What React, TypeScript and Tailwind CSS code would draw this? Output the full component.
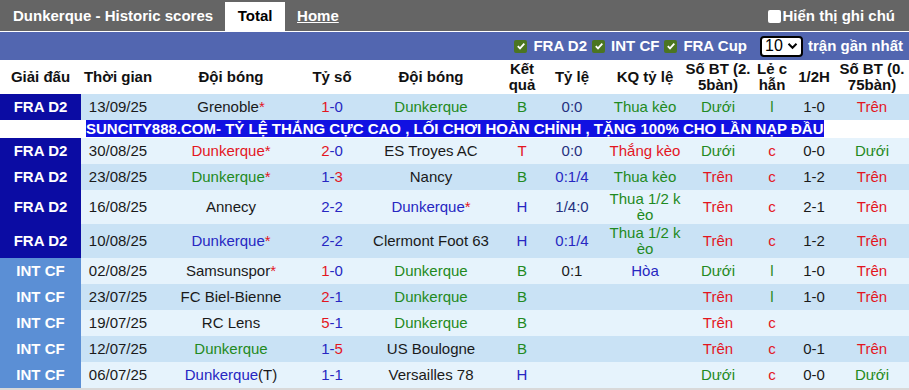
import type { ReactNode } from 'react';

const RED = 'text-[#e3161f]';
const GREEN = 'text-[#1f8a22]';
const BLUE = 'text-[#2727c2]';
const NAVY = 'text-[#25307f]';
const DARK = 'text-[#1a1a1a]';

const star = <span className={RED}>*</span>;

function Score({ h, a }: { h: number; a: number }) {
  if (h === a) return <span className={BLUE}>{h}-{a}</span>;
  if (h > a)
    return (
      <>
        <span className={RED}>{h}</span>
        <span className={BLUE}>-{a}</span>
      </>
    );
  return (
    <>
      <span className={BLUE}>{h}-</span>
      <span className={RED}>{a}</span>
    </>
  );
}

type Cell = [ReactNode, string];

interface Match {
  league: 'FRA D2' | 'INT CF';
  date: string;
  home: ReactNode;
  score: ReactNode;
  away: ReactNode;
  res: Cell;
  odds: Cell;
  kq: Cell;
  bt: Cell;
  lc: Cell;
  half: string;
  bt2: Cell;
  tall?: boolean;
}

const tren: Cell = ['Trên', RED];
const duoi: Cell = ['Dưới', GREEN];
const le: Cell = ['l', GREEN];
const chan: Cell = ['c', RED];
const none: Cell = ['', DARK];
const thua12: Cell = [
  <>
    Thua 1/2 k
    <br />
    èo
  </>,
  GREEN,
];

const matches: Match[] = [
  {
    league: 'FRA D2', date: '13/09/25',
    home: <span className={DARK}>Grenoble{star}</span>, score: <Score h={1} a={0} />,
    away: <span className={GREEN}>Dunkerque</span>, res: ['B', GREEN], odds: ['0:0', NAVY],
    kq: ['Thua kèo', GREEN], bt: duoi, lc: le, half: '1-0', bt2: tren,
  },
  {
    league: 'FRA D2', date: '30/08/25',
    home: <span className={RED}>Dunkerque*</span>, score: <Score h={2} a={0} />,
    away: <span className={DARK}>ES Troyes AC</span>, res: ['T', RED], odds: ['0:0', NAVY],
    kq: ['Thắng kèo', RED], bt: duoi, lc: chan, half: '0-0', bt2: duoi,
  },
  {
    league: 'FRA D2', date: '23/08/25',
    home: <span className={GREEN}>Dunkerque{star}</span>, score: <Score h={1} a={3} />,
    away: <span className={DARK}>Nancy</span>, res: ['B', GREEN], odds: ['0:1/4', BLUE],
    kq: ['Thua kèo', GREEN], bt: tren, lc: chan, half: '1-2', bt2: tren,
  },
  {
    league: 'FRA D2', date: '16/08/25',
    home: <span className={DARK}>Annecy</span>, score: <Score h={2} a={2} />,
    away: <span className={BLUE}>Dunkerque{star}</span>, res: ['H', BLUE], odds: ['1/4:0', NAVY],
    kq: thua12, bt: tren, lc: chan, half: '2-1', bt2: tren, tall: true,
  },
  {
    league: 'FRA D2', date: '10/08/25',
    home: <span className={BLUE}>Dunkerque{star}</span>, score: <Score h={2} a={2} />,
    away: <span className={DARK}>Clermont Foot 63</span>, res: ['H', BLUE], odds: ['0:1/4', BLUE],
    kq: thua12, bt: tren, lc: chan, half: '1-2', bt2: tren, tall: true,
  },
  {
    league: 'INT CF', date: '02/08/25',
    home: <span className={DARK}>Samsunspor{star}</span>, score: <Score h={1} a={0} />,
    away: <span className={GREEN}>Dunkerque</span>, res: ['B', GREEN], odds: ['0:1', DARK],
    kq: ['Hòa', BLUE], bt: duoi, lc: le, half: '1-0', bt2: tren,
  },
  {
    league: 'INT CF', date: '23/07/25',
    home: <span className={DARK}>FC Biel-Bienne</span>, score: <Score h={2} a={1} />,
    away: <span className={GREEN}>Dunkerque</span>, res: ['B', GREEN], odds: none,
    kq: none, bt: tren, lc: le, half: '1-0', bt2: tren,
  },
  {
    league: 'INT CF', date: '19/07/25',
    home: <span className={DARK}>RC Lens</span>, score: <Score h={5} a={1} />,
    away: <span className={GREEN}>Dunkerque</span>, res: ['B', GREEN], odds: none,
    kq: none, bt: tren, lc: chan, half: '', bt2: none,
  },
  {
    league: 'INT CF', date: '12/07/25',
    home: <span className={GREEN}>Dunkerque</span>, score: <Score h={1} a={5} />,
    away: <span className={DARK}>US Boulogne</span>, res: ['B', GREEN], odds: none,
    kq: none, bt: tren, lc: chan, half: '0-1', bt2: tren,
  },
  {
    league: 'INT CF', date: '06/07/25',
    home: (
      <>
        <span className={BLUE}>Dunkerque</span>
        <span className={DARK}>(T)</span>
      </>
    ),
    score: <Score h={1} a={1} />,
    away: <span className={DARK}>Versailles 78</span>, res: ['H', BLUE], odds: none,
    kq: none, bt: duoi, lc: chan, half: '0-0', bt2: duoi,
  },
];

const widths = [81, 74, 152, 50, 148, 34, 66, 80, 66, 42, 42, 74];

function Check() {
  return (
    <span className="flex h-[13px] w-[13px] items-center justify-center rounded-[2px] bg-[#4b7521]">
      <svg width="10" height="10" viewBox="0 0 10 10">
        <path d="M1.8 5.2 L4 7.4 L8.3 2.6" fill="none" stroke="white" strokeWidth="1.8" />
      </svg>
    </span>
  );
}

export default function App() {
  return (
    <div className="w-[909px] bg-white font-['Liberation_Sans',Arial,sans-serif]">
      {/* title bar */}
      <div className="flex h-[31px] items-stretch bg-[#656565] pt-[2px] text-[15px] font-bold text-white">
        <div className="flex items-center pl-[13px]">Dunkerque - Historic scores</div>
        <div className="ml-[12px] flex w-[60px] items-center justify-center bg-white text-black">Total</div>
        <div className="ml-[12px] flex items-center underline">Home</div>
        <div className="ml-auto mr-[14px] flex items-center gap-[2px]">
          <span className="h-[13px] w-[13px] rounded-[2px] bg-white" />
          <span>Hiển thị ghi chú</span>
        </div>
      </div>
      <div className="h-[1px] bg-white" />

      {/* filter bar */}
      <div className="flex h-[28px] items-center justify-end bg-[#5266b0] pr-[6px] text-[15px] font-bold text-white">
        <Check />
        <span className="ml-[6px]">FRA D2</span>
        <span className="ml-[5px]"><Check /></span>
        <span className="ml-[6px]">INT CF</span>
        <span className="ml-[5px]"><Check /></span>
        <span className="ml-[6px]">FRA Cup</span>
        <div className="ml-[13px] flex h-[21px] w-[43px] items-center rounded-[4px] border-2 border-black bg-white pl-[3px] text-[16px] font-normal text-black">
          <span>10</span>
          <svg className="ml-[4px]" width="11" height="8" viewBox="0 0 11 8">
            <path d="M1.5 1.8 L5.5 5.8 L9.5 1.8" fill="none" stroke="black" strokeWidth="2" />
          </svg>
        </div>
        <span className="ml-[5px]">trận gần nhất</span>
      </div>

      <table className="w-[909px] table-fixed border-collapse text-[15px] leading-[16px]">
        <colgroup>
          {widths.map((w, i) => (
            <col key={i} style={{ width: w }} />
          ))}
        </colgroup>
        <thead>
          <tr className="h-[34px] bg-white text-center font-bold text-[#111]">
            <th className="whitespace-nowrap p-0">Giải đấu</th>
            <th className="whitespace-nowrap p-0">Thời gian</th>
            <th className="whitespace-nowrap p-0">Đội bóng</th>
            <th className="whitespace-nowrap p-0">Tỷ số</th>
            <th className="whitespace-nowrap p-0">Đội bóng</th>
            <th className="whitespace-nowrap p-0">Kết<br />quả</th>
            <th className="whitespace-nowrap p-0">Tỷ lệ</th>
            <th className="whitespace-nowrap p-0">KQ tỷ lệ</th>
            <th className="whitespace-nowrap p-0">Số BT (2.<br />5bàn)</th>
            <th className="whitespace-nowrap p-0">Lẻ c<br />hẫn</th>
            <th className="whitespace-nowrap p-0">1/2H</th>
            <th className="whitespace-nowrap p-0">Số BT (0.<br />75bàn)</th>
          </tr>
        </thead>
        <tbody>
          {matches.map((m, i) => {
            const rowBg = i % 2 === 0 ? 'bg-[#c9e2f5]' : 'bg-[#e6f3fc]';
            return [
              <tr key={m.date} className={`${m.tall ? 'h-[34px]' : 'h-[26px]'} ${rowBg} text-center`}>
                <td className={`p-0 font-bold text-white ${m.league === 'FRA D2' ? 'bg-[#0b0ca3]' : 'bg-[#5b8fd5]'}`}>
                  {m.league}
                </td>
                <td className={`whitespace-nowrap p-0 ${DARK}`}>{m.date}</td>
                <td className="whitespace-nowrap p-0">{m.home}</td>
                <td className="whitespace-nowrap p-0">{m.score}</td>
                <td className="whitespace-nowrap p-0">{m.away}</td>
                <td className={`p-0 ${m.res[1]}`}>{m.res[0]}</td>
                <td className={`whitespace-nowrap p-0 ${m.odds[1]}`}>{m.odds[0]}</td>
                <td className={`whitespace-nowrap p-0 ${m.kq[1]}`}>{m.kq[0]}</td>
                <td className={`p-0 ${m.bt[1]}`}>{m.bt[0]}</td>
                <td className={`p-0 ${m.lc[1]}`}>{m.lc[0]}</td>
                <td className={`p-0 ${DARK}`}>{m.half}</td>
                <td className={`p-0 ${m.bt2[1]}`}>{m.bt2[0]}</td>
              </tr>,
              i === 0 ? (
                <tr key="ad" className="h-[18px] bg-white">
                  <td className="p-0" />
                  <td colSpan={11} className="whitespace-nowrap p-0 pl-[5px] text-left">
                    <span className="bg-[#1111e2] text-[15px] font-bold leading-[18px] text-white">
                      SUNCITY888.COM- TỶ LỆ THẮNG CỰC CAO , LỐI CHƠI HOÀN CHỈNH , TẶNG 100% CHO LẦN NẠP ĐẦU
                    </span>
                  </td>
                </tr>
              ) : null,
            ];
          })}
        </tbody>
      </table>
      <div className="h-[2px] bg-[#d9d9d9]" />
    </div>
  );
}
